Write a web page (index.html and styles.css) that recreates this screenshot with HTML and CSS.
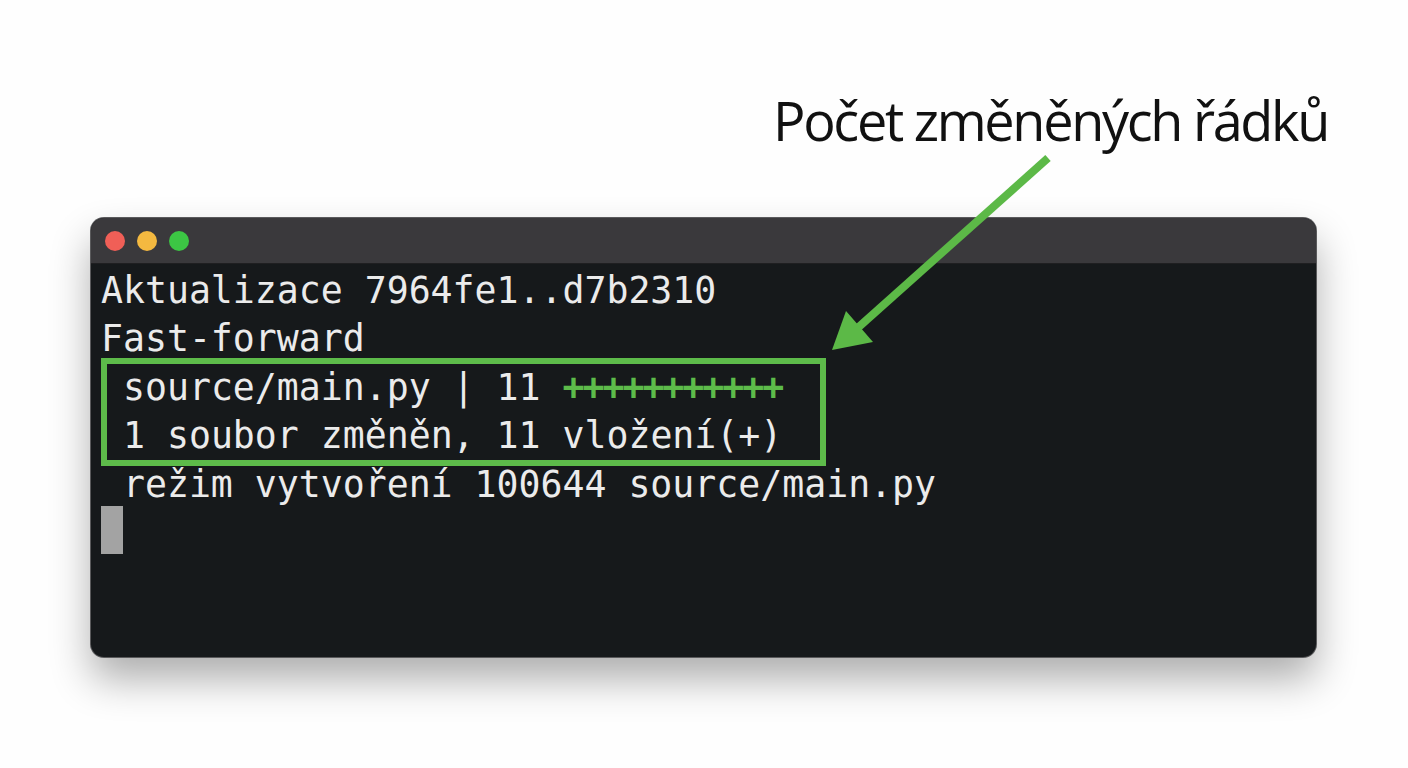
FILE: index.html
```html
<!DOCTYPE html>
<html lang="cs">
<head>
<meta charset="utf-8">
<title>Počet změněných řádků</title>
<link rel="stylesheet" href="styles.css">
</head>
<body>
<div class="stage">
  <div class="label">Počet změněných řádků</div>
  <div class="window">
    <div class="titlebar">
      <span class="dot red"></span>
      <span class="dot yellow"></span>
      <span class="dot green"></span>
    </div>
    <div class="term">
      <div class="line">Aktualizace 7964fe1..d7b2310</div>
      <div class="line">Fast-forward</div>
      <div class="hl">
        <div class="line">source/main.py | 11 <span class="plus">+++++++++++</span></div>
        <div class="line">1 soubor změněn, 11 vložení(+)</div>
      </div>
      <div class="line"> režim vytvoření 100644 source/main.py</div>
      <div class="line"><span class="cursor"></span></div>
    </div>
  </div>
  <svg class="arrow" width="1408" height="768" viewBox="0 0 1408 768">
    <line x1="1048" y1="158" x2="852" y2="333" stroke="#5cb947" stroke-width="8" stroke-linecap="butt"/>
    <polygon points="832,350 846,311 873,342" fill="#5cb947"/>
  </svg>
</div>
</body>
</html>
```
FILE: styles.css
```css
html, body {
  margin: 0;
  padding: 0;
  background: #ffffff;
}
.stage {
  position: relative;
  width: 1408px;
  height: 768px;
  overflow: hidden;
  background: #fefefe;
}
.label {
  padding: 84px 0 0 773px;
  height: 74px;
  font-family: "Open Sans", "Noto Sans", sans-serif;
  font-size: 54px;
  letter-spacing: -2.3px;
  line-height: 72px;
  color: #111111;
}
.window {
  margin: 60px 0 0 91px;
  width: 1225px;
  height: 439px;
  border-radius: 13px;
  background: #16191b;
  overflow: hidden;
  box-shadow: 0 0 0 1px #5a5a5c, 0 22px 40px rgba(0, 0, 0, 0.32);
}
.titlebar {
  height: 46px;
  background: #3a393c;
  border-bottom: 1px solid #1f1f21;
  display: flex;
  align-items: center;
  gap: 12px;
  padding-left: 14px;
  box-sizing: border-box;
}
.dot {
  width: 20px;
  height: 20px;
  border-radius: 50%;
}
.red { background: #f05f57; }
.yellow { background: #f4b940; }
.green { background: #3cc644; }
.term {
  padding: 3px 0 0 10px;
  font-family: "DejaVu Sans Mono", monospace;
  font-size: 36.5px;
  line-height: 48px;
  color: #ebebeb;
}
.line {
  white-space: pre;
  height: 48px;
}
.hl {
  width: 697px;
  border: 6px solid #5dbb4a;
  margin: -5px 0 -5px 0;
  padding-left: 16px;
  box-sizing: content-box;
}
.plus {
  color: #5dbb4a;
  font-weight: bold;
  letter-spacing: -2px;
}
.cursor {
  display: inline-block;
  width: 22px;
  height: 48px;
  background: #a3a3a3;
  vertical-align: top;
  margin-top: -3px;
}
.arrow {
  position: absolute;
  left: 0;
  top: 0;
  pointer-events: none;
}
```
